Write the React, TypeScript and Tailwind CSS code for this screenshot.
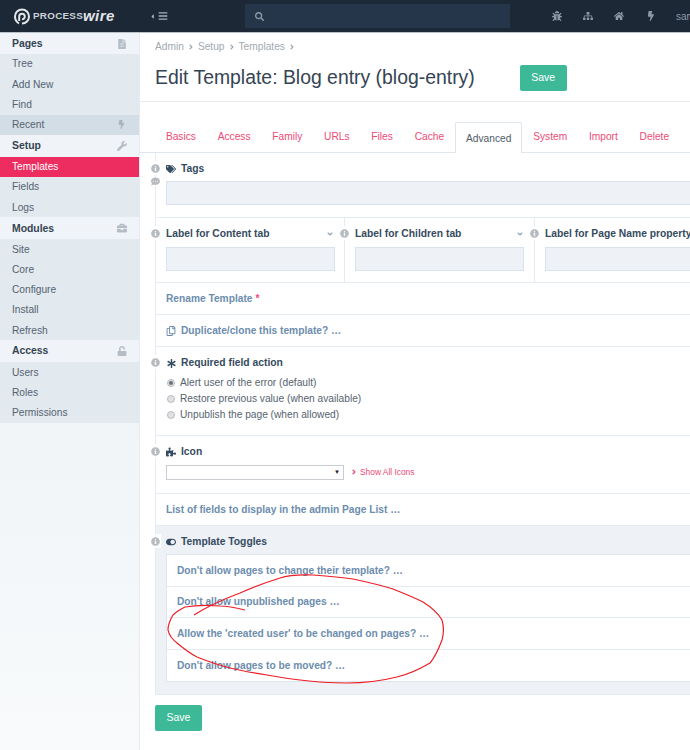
import type { ReactNode } from "react";
import {
  FaAngleDown,
  FaAngleRight,
  FaAsterisk,
  FaBars,
  FaBolt,
  FaBriefcase,
  FaBug,
  FaCaretLeft,
  FaCommentDots,
  FaFileAlt,
  FaHome,
  FaInfoCircle,
  FaPuzzlePiece,
  FaRegCopy,
  FaSearch,
  FaSitemap,
  FaTags,
  FaToggleOn,
  FaUnlock,
  FaWrench,
} from "react-icons/fa";

const sidebar = [
  { title: "Pages", icon: <FaFileAlt />, items: ["Tree", "Add New", "Find", "Recent"] },
  { title: "Setup", icon: <FaWrench />, items: ["Templates", "Fields", "Logs"] },
  { title: "Modules", icon: <FaBriefcase />, items: ["Site", "Core", "Configure", "Install", "Refresh"] },
  { title: "Access", icon: <FaUnlock />, items: ["Users", "Roles", "Permissions"] },
];

const tabs = ["Basics", "Access", "Family", "URLs", "Files", "Cache", "Advanced", "System", "Import", "Delete"];

const toggles = [
  "Don't allow pages to change their template? …",
  "Don't allow unpublished pages …",
  "Allow the 'created user' to be changed on pages? …",
  "Don't allow pages to be moved? …",
];

function Info() {
  return (
    <span className="absolute top-[8px] -left-[7px] flex h-[14px] w-[12px] items-center justify-center bg-white text-[9px] text-[#b5bbbf]">
      <FaInfoCircle />
    </span>
  );
}

function Label({ icon, children }: { icon?: ReactNode; children: ReactNode }) {
  return (
    <div className="flex h-[14px] items-center gap-[5px] text-[10.3px] font-bold text-[#354b60]">
      {icon && <span className="flex w-[10px] justify-center text-[10px]">{icon}</span>}
      <span>{children}</span>
    </div>
  );
}

function TextBox({ className }: { className: string }) {
  return <div className={`h-[24px] border border-[#d8e3ef] bg-[#eef1f6] ${className}`} />;
}

function SaveButton() {
  return (
    <button className="flex h-[26px] w-[47px] items-center justify-center rounded-[2px] bg-[#3eb998] text-[10.5px] text-white">
      Save
    </button>
  );
}

export default function App() {
  return (
    <div className="relative flex h-[750px] w-[690px] flex-col overflow-hidden bg-white font-['Liberation_Sans',Arial,sans-serif]">
      <header className="flex h-[33px] shrink-0 items-center border-b border-[#b9c1c9] bg-[#1c2836]">
        <div className="flex w-[140px] shrink-0 items-center pl-[14px] text-[#e3e6e9]">
          <svg width="16" height="17" viewBox="0 0 16 17" fill="none" stroke="currentColor" strokeWidth="2" className="mr-[3px] shrink-0">
            <path d="M5 15.5 C2.5 14 1 11.5 1 8.5 A7 7 0 1 1 8 15.5" />
            <path d="M5.2 13 V8.5 A2.8 2.8 0 1 1 8 11.3" />
          </svg>
          <span className="text-[9.8px] font-bold tracking-[0.3px] text-[#cdd2d7]">PROCESS</span>
          <span className="text-[15px] font-bold italic tracking-[0.4px] text-[#e3e6e9]">wire</span>
        </div>
        <div className="flex w-[105px] shrink-0 items-center gap-[2px] pl-[9px] text-[#a7afb7]">
          <FaCaretLeft className="text-[7px]" />
          <FaBars className="text-[10px]" />
        </div>
        <div className="flex h-[24px] w-[265px] shrink-0 items-center bg-[#25354a] pl-[10px] text-[9px] text-[#8d99a6]">
          <FaSearch />
        </div>
        <div className="flex shrink-0 items-center pl-[42px] text-[10px] text-[#8d99a6]">
          <FaBug />
          <FaSitemap className="ml-[21px]" />
          <FaHome className="ml-[21px]" />
          <FaBolt className="ml-[22px]" />
          <span className="ml-[20px] whitespace-nowrap text-[10px]">samyoul</span>
        </div>
      </header>

      <div className="flex min-h-0 flex-1">
        <aside className="w-[140px] shrink-0 border-r border-[#e6ebf0] bg-gradient-to-b from-[#e9eff4] to-[#f8fafb] text-[10.2px] text-[#55636f]">
          {sidebar.map((group, g) => (
            <div key={group.title}>
              <div
                className={`flex items-center justify-between bg-[#f0f3f7] px-[12px] text-[10.4px] font-bold text-[#354453] ${
                  g === 0 ? "h-[21px]" : "h-[22px]"
                }`}
              >
                <span>{group.title}</span>
                <span className="text-[10px] text-[#b4bdc5]">{group.icon}</span>
              </div>
              <div className="bg-[#e2e9ef]">
                {group.items.map((item) => (
                  <div
                    key={item}
                    className={`flex h-[20.2px] items-center justify-between pl-[12px] pr-[13px] ${
                      item === "Templates" ? "bg-[#ed2c60] text-white" : item === "Recent" ? "bg-[#d3dde5]" : ""
                    }`}
                  >
                    <span>{item}</span>
                    {item === "Recent" && <FaBolt className="text-[9px] text-[#aab4bd]" />}
                  </div>
                ))}
              </div>
            </div>
          ))}
        </aside>

        <main className="min-w-0 flex-1">
          <div className="h-[69px] border-b border-[#e6ebf0] pl-[15px] pt-[8px]">
            <div className="flex h-[12px] items-center text-[10.2px] text-[#a1a9b1]">
              <span>Admin</span>
              <FaAngleRight className="mx-[3px] text-[8px]" />
              <span>Setup</span>
              <FaAngleRight className="mx-[3px] text-[8px]" />
              <span>Templates</span>
              <FaAngleRight className="mx-[3px] text-[8px]" />
            </div>
            <div className="mt-[12px] flex items-start">
              <h1 className="-mt-[1px] whitespace-nowrap text-[19.4px] leading-[26px] text-[#354453]">Edit Template: Blog entry (blog-entry)</h1>
              <div className="ml-[45px]">
                <SaveButton />
              </div>
            </div>
          </div>

          <div className="mt-[19px] flex h-[32px] w-[700px] items-end border-b border-[#dfe6ee] pl-[15px] text-[10.2px] text-[#ee4a76]">
            {tabs.map((tab) => (
              <div
                key={tab}
                className={`flex h-[31px] items-center pt-[1px] ${
                  tab === "Advanced"
                    ? "mb-[-1px] rounded-t-[2px] border border-b-0 border-[#dfe6ee] bg-white px-[10px] text-[#4f5b66]"
                    : "px-[10.9px]"
                }`}
              >
                {tab}
              </div>
            ))}
          </div>

          <div className="ml-[15px] w-[700px] border-l border-[#e4ebf2] text-[10.2px]">
            <section className="relative h-[65px] border-b border-[#e4ebf2] pl-[10px] pt-[9px]">
              <Info />
              <span className="absolute -left-[7px] top-[24px] flex w-[12px] justify-center bg-white text-[9px] text-[#b5bbbf]">
                <FaCommentDots />
              </span>
              <Label icon={<FaTags />}>Tags</Label>
              <TextBox className="mt-[5px] w-[600px]" />
            </section>

            <section className="flex h-[65px] border-b border-[#e4ebf2]">
              {["Label for Content tab", "Label for Children tab", "Label for Page Name property"].map((label, i) => (
                <div
                  key={label}
                  className={`relative shrink-0 pl-[10px] pt-[9px] pr-[10px] ${
                    i === 0 ? "w-[189px] border-r border-[#e4ebf2]" : i === 1 ? "w-[190px] border-r border-[#e4ebf2]" : "w-[189px]"
                  }`}
                >
                  <Info />
                  <div className="flex items-center justify-between whitespace-nowrap">
                    <Label>{label}</Label>
                    {i < 2 && <FaAngleDown className="text-[8px] text-[#8fa3b6]" />}
                  </div>
                  <TextBox className="mt-[6px] w-[169px]" />
                </div>
              ))}
            </section>

            <section className="flex h-[32px] items-center border-b border-[#e4ebf2] pl-[10px] font-bold text-[#6c8dae]">
              Rename Template <span className="ml-[3px] text-[#ee4a76]">*</span>
            </section>

            <section className="flex h-[32px] items-center gap-[5px] border-b border-[#e4ebf2] pl-[10px] font-bold text-[#6c8dae]">
              <FaRegCopy className="text-[10px]" />
              Duplicate/clone this template? …
            </section>

            <section className="relative h-[89px] border-b border-[#e4ebf2] pl-[10px] pt-[9px]">
              <Info />
              <Label icon={<FaAsterisk className="text-[9px]" />}>Required field action</Label>
              <div className="mt-[6px] flex flex-col gap-[3px] pl-[1px] text-[#566370]">
                {["Alert user of the error (default)", "Restore previous value (when available)", "Unpublish the page (when allowed)"].map((option, i) => (
                  <div key={option} className="flex h-[13px] items-center gap-[5px]">
                    <span className="flex h-[8px] w-[8px] items-center justify-center rounded-full border border-[#b8bcc0] bg-[#dfe1e3]">
                      {i === 0 && <span className="h-[4px] w-[4px] rounded-full bg-[#6b7278]" />}
                    </span>
                    {option}
                  </div>
                ))}
              </div>
            </section>

            <section className="relative h-[58px] border-b border-[#e4ebf2] pl-[10px] pt-[9px]">
              <Info />
              <Label icon={<FaPuzzlePiece />}>Icon</Label>
              <div className="mt-[6px] flex items-center">
                <div className="flex h-[15px] w-[178px] items-center justify-end border border-[#c9cdd1] pr-[3px] text-[6px] text-[#222]">▼</div>
                <span className="ml-[6px] flex items-center text-[8.4px] text-[#ee4a76]">
                  <FaAngleRight className="mr-[2px] text-[8px]" />
                  Show All Icons
                </span>
              </div>
            </section>

            <section className="flex h-[32px] items-center border-b border-[#e4ebf2] pl-[10px] font-bold text-[#6c8dae]">
              List of fields to display in the admin Page List …
            </section>

            <section className="relative h-[169px] border-b border-[#e4ebf2] bg-[#eef1f6] pl-[10px] pt-[9px]">
              <Info />
              <Label icon={<FaToggleOn className="text-[12px]" />}>Template Toggles</Label>
              <div className="mt-[5px] border border-[#dfe6ee] bg-white">
                {toggles.map((toggle, i) => (
                  <div
                    key={toggle}
                    className={`flex h-[31.6px] items-center pl-[10px] font-bold text-[#6c8dae] ${i < 3 ? "border-b border-[#e4ebf2]" : ""}`}
                  >
                    {toggle}
                  </div>
                ))}
              </div>
            </section>
          </div>

          <div className="ml-[15px] mt-[10px]">
            <SaveButton />
          </div>
        </main>
      </div>

      {/* hand drawn annotation on top of the screenshot */}
      <svg className="pointer-events-none absolute left-0 top-0" width="690" height="750" fill="none" stroke="#ee1c25" strokeWidth="1.2">
        <path d="M194 615 C208 606 224 599 240 593 C254 587 267 582 280 578 C292 574 303 575 313 575 C327 576 340 577 353 579 C367 582 380 585 393 589 C403 593 413 597 423 602 C431 607 438 613 442 620 C444 627 444 633 442 640 C439 648 436 656 430 663 C420 669 409 674 397 677 C381 681 364 683 347 683 C331 683 315 682 300 680 C289 679 278 677 267 675 C254 673 242 671 230 668 C218 665 207 661 197 657 C189 653 183 648 177 643 C172 639 169 635 168 630 C168 625 170 620 173 615 C177 611 181 609 185 607 C197 605 208 605 220 606 C229 606 237 608 245 610" />
      </svg>
    </div>
  );
}
